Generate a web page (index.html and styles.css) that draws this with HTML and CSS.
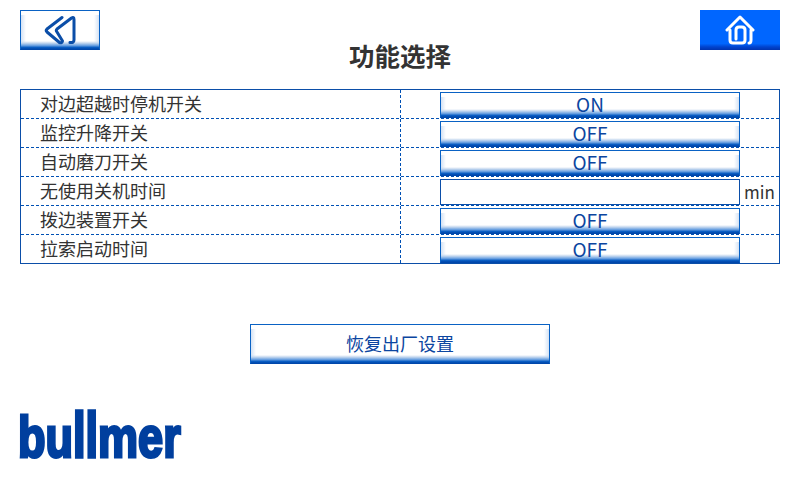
FILE: index.html
```html
<!DOCTYPE html>
<html lang="zh-CN">
<head>
    <meta charset="UTF-8">
    <title>功能选择</title>
    <link rel="stylesheet" href="styles.css">
</head>
<body>
<div class="page">
    <header class="top">
        <button class="btn nav-btn">
            <svg width="32" height="30" viewBox="0 0 32 30" fill="none" stroke="#0b4ea8" stroke-width="3" stroke-linecap="round" stroke-linejoin="round">
                <path d="M18 2.5 L3 14 Q1.5 15.5 3 17 L15.5 27.5 Q18 28.5 18.5 26 L13 17 Q11.5 15.5 13 14 L27.5 3 Q30 1.5 30 4.5 V25 Q30 28 26 27.5"/>
            </svg>
        </button>
        <h1 class="title">功能选择</h1>
        <button class="btn-home nav-btn">
            <svg width="30" height="30" viewBox="0 0 30 30" fill="none" stroke="#fff" stroke-width="3" stroke-linecap="round" stroke-linejoin="round">
                <path d="M2 15 L15 2 L28 15"/>
                <path d="M5 15 V25 Q5 28 8 28 H17 Q20 28 20 25 V15 Q20 12 17 12 H14 Q11 12 11 15 V24"/>
                <path d="M26 15 V25 Q26 28 24 28"/>
            </svg>
        </button>
    </header>

    <div class="table">
        <div class="row">
            <div class="cell-label">对边超越时停机开关</div>
            <div class="cell-value"><button class="btn value">ON</button></div>
        </div>
        <div class="row">
            <div class="cell-label">监控升降开关</div>
            <div class="cell-value"><button class="btn value">OFF</button></div>
        </div>
        <div class="row">
            <div class="cell-label">自动磨刀开关</div>
            <div class="cell-value"><button class="btn value">OFF</button></div>
        </div>
        <div class="row">
            <div class="cell-label">无使用关机时间</div>
            <div class="cell-value"><div class="input"></div><span class="unit">min</span></div>
        </div>
        <div class="row">
            <div class="cell-label">拨边装置开关</div>
            <div class="cell-value"><button class="btn value">OFF</button></div>
        </div>
        <div class="row">
            <div class="cell-label">拉索启动时间</div>
            <div class="cell-value"><button class="btn value">OFF</button></div>
        </div>
    </div>

    <div class="reset-wrap">
        <button class="btn reset">恢复出厂设置</button>
    </div>

    <div class="logo"><span class="logo-text">bu<span class="logo-ll">ll</span>mer</span></div>
</div>
</body>
</html>
```

FILE: styles.css
```css
* {
    box-sizing: border-box;
}
body {
    margin: 0;
    background: #fff;
    font-family: "Noto Sans CJK SC", "Noto Sans", sans-serif;
    color: #333;
}
.page {
    width: 800px;
    height: 480px;
    padding: 10px 20px 0;
    overflow: hidden;
}
.top {
    display: grid;
    grid-template-columns: 80px 1fr 80px;
    height: 79px;
}
.nav-btn {
    width: 80px;
    height: 40px;
    padding: 0;
    display: flex;
    align-items: center;
    justify-content: center;
}
.title {
    margin: 27px 0 0;
    font-size: 25.5px;
    line-height: 36px;
    font-weight: 700;
    text-align: center;
    color: #333;
}
.btn {
    border: 1px solid #0a62c4;
    border-bottom-color: #0047ab;
    background:
        linear-gradient(to bottom, rgba(197, 216, 239, 0) 0, #c5d8ef 25%, #6ea3e2 55%, #0a5ec4 80%, #0047ab 100%) left bottom / 100% 8px no-repeat,
        linear-gradient(to right, #d4e2f4, #fff 5px, #fff calc(100% - 5px), #d4e2f4) left 0 top 4px no-repeat,
        #fff;
    color: #0b45a0;
    font-family: inherit;
}
.btn-home {
    border: 0;
    background: linear-gradient(to bottom, #0066ff 0, #0066ff 84%, #0044d0 92%, #0033b0 100%);
}
.table {
    border: 1px solid #0b4ea8;
    height: 175px;
}
.row {
    display: grid;
    grid-template-columns: 380px 1fr;
    height: 29px;
    border-bottom: 1px dashed #0050b4;
}
.row:last-child {
    border-bottom: 0;
    height: 28px;
}
.cell-label {
    padding-left: 19px;
    font-size: 18px;
    line-height: 26px;
    border-right: 1px dashed #0050b4;
}
.cell-value {
    display: flex;
    align-items: center;
    padding-left: 39px;
    padding-top: 1px;
}
.value {
    width: 300px;
    height: 26px;
    padding: 0 0 5px;
    font-size: 19px;
    font-weight: 400;
    line-height: 22px;
}
.input {
    width: 300px;
    height: 26px;
    border: 1px solid #0b4ea8;
    background: #fff;
}
.unit {
    margin-left: 4px;
    font-size: 17px;
    font-weight: 400;
}
.reset-wrap {
    display: flex;
    justify-content: center;
    margin-top: 60px;
}
.reset {
    width: 300px;
    height: 40px;
    padding: 0 0 2px;
    font-size: 18px;
    font-weight: 400;
}
.logo {
    margin-top: 50px;
    height: 46px;
}
.logo-text {
    display: inline-block;
    margin-left: -2px;
    font-family: "Liberation Sans", sans-serif;
    font-weight: 700;
    font-size: 57px;
    line-height: 46px;
    color: #003f9e;
    -webkit-text-stroke: 3px #003f9e;
    transform-origin: left center;
    transform: scaleX(0.79);
}
.logo-ll {
    display: inline-block;
    transform-origin: left bottom;
    transform: scaleY(1.12);
}
```
